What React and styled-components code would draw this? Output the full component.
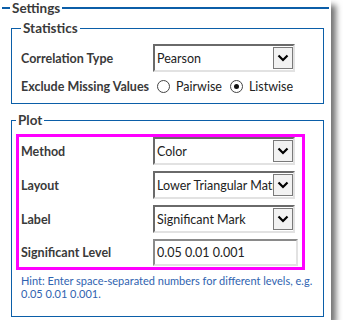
import React, { useState } from 'react';
import styled, { createGlobalStyle } from 'styled-components';

const GlobalStyle = createGlobalStyle`
	html, body {
		margin: 0;
		padding: 0;
		background: #fff;
	}
	body {
		font-family: Lato, 'Liberation Sans', sans-serif;
		color: #333;
	}
`;

const Panel = styled.div`
	width: 331px;
	background: #fff;
	box-shadow: 5px 5px 6px rgba(0, 0, 0, 0.55);
	padding: 0 2px 3px 2px;
	box-sizing: border-box;
`;

const Settings = styled.fieldset`
	margin: 0;
	padding: 4px 5px 0 9px;
	border: none;
	border-top: 2px solid #0b5ea8;
	min-width: 0;

	> legend {
		font-size: 13.5px;
		line-height: 16px;
		font-weight: 700;
		color: #3a3a3a;
		padding: 0 2px;
		margin-left: -1px;
	}
`;

const Group = styled.fieldset`
	margin: ${p => (p.$first ? '0' : '8px')} 0 0 0;
	padding: ${p => p.$pad};
	border: 1px solid #0b5ea8;
	min-width: 0;

	> legend {
		font-size: 13.5px;
		line-height: 16px;
		font-weight: 700;
		color: #3a3a3a;
		padding: 0 2px;
	}
`;

const Rows = styled.div`
	display: grid;
	grid-template-columns: 132px 1fr;
	align-items: center;
	row-gap: ${p => p.$gap}px;
`;

const Label = styled.div`
	font-size: 12.5px;
	font-weight: 700;
	color: #3a3a3a;
	white-space: nowrap;
`;

const Select = styled.div`
	width: 142px;
	height: 28px;
	box-sizing: border-box;
	display: flex;
	align-items: center;
	border-top: 2px solid #6a6a6a;
	border-left: 2px solid #6a6a6a;
	border-bottom: 2px solid #e2e2e2;
	border-right: 2px solid #e2e2e2;
	background: #fff;
	font-size: 12.5px;
	color: #222;
`;

const SelectText = styled.div`
	flex: 1;
	padding-left: 2px;
	overflow: hidden;
	white-space: nowrap;
`;

const DropButton = styled.div`
	width: 20px;
	height: 22px;
	box-sizing: border-box;
	border: 1px solid #7a7a7a;
	background: #f2f2f2;
	display: flex;
	align-items: center;
	justify-content: center;
`;

const TextInput = styled.input`
	width: 145px;
	height: 27px;
	box-sizing: border-box;
	border-top: 2px solid #8a8a8a;
	border-left: 2px solid #8a8a8a;
	border-bottom: 2px solid #e2e2e2;
	border-right: 2px solid #e2e2e2;
	padding: 0 2px;
	font-family: inherit;
	font-size: 12.5px;
	color: #222;
	outline: none;
`;

const Radios = styled.div`
	display: flex;
	align-items: center;
	font-size: 12.5px;
	color: #222;
	padding-left: 4px;
`;

const RadioItem = styled.label`
	display: flex;
	align-items: center;
	gap: 6px;
	margin-right: 8px;
	cursor: pointer;
`;

const Circle = styled.span`
	width: 11px;
	height: 11px;
	border-radius: 50%;
	border: 1px solid #444;
	display: flex;
	align-items: center;
	justify-content: center;

	&::after {
		content: '';
		width: 5px;
		height: 5px;
		border-radius: 50%;
		background: ${p => (p.$on ? '#111' : 'transparent')};
	}
`;

const Highlight = styled.div`
	width: 289px;
	box-sizing: border-box;
	border: 3px solid #ff00ff;
	padding: 0 0 1px 2px;
`;

const Hint = styled.div`
	margin-top: 4px;
	padding-left: 5px;
	font-size: 11px;
	line-height: 13px;
	color: #2f63b0;
	white-space: nowrap;
`;

const Chevron = () => (
	<svg width="12" height="8" viewBox="0 0 12 8">
		<polyline points="1.5,1.5 6,6 10.5,1.5" fill="none" stroke="#000" strokeWidth="2.2" />
	</svg>
);

const Dropdown = ({ value }) => (
	<Select>
		<SelectText>{value}</SelectText>
		<DropButton>
			<Chevron />
		</DropButton>
	</Select>
);

const App = () => {
	const [missing, setMissing] = useState('listwise');

	return (
		<>
			<GlobalStyle />
			<Panel>
				<Settings>
					<legend>Settings</legend>
					<Group $first $pad="8px 9px 9px 9px">
						<legend>Statistics</legend>
						<Rows $gap={7}>
							<Label>Correlation Type</Label>
							<Dropdown value="Pearson" />
							<Label>Exclude Missing Values</Label>
							<Radios>
								<RadioItem onClick={() => setMissing('pairwise')}>
									<Circle $on={missing === 'pairwise'} />
									Pairwise
								</RadioItem>
								<RadioItem onClick={() => setMissing('listwise')}>
									<Circle $on={missing === 'listwise'} />
									Listwise
								</RadioItem>
							</Radios>
						</Rows>
					</Group>
					<Group $pad="6px 4px 16px 4px">
						<legend>Plot</legend>
						<Highlight>
							<Rows $gap={6}>
								<Label>Method</Label>
								<Dropdown value="Color" />
								<Label>Layout</Label>
								<Dropdown value="Lower Triangular Matrix" />
								<Label>Label</Label>
								<Dropdown value="Significant Mark" />
								<Label>Significant Level</Label>
								<TextInput defaultValue="0.05 0.01 0.001" />
							</Rows>
						</Highlight>
						<Hint>
							Hint: Enter space-separated numbers for different levels, e.g.
							<br />
							0.05 0.01 0.001.
						</Hint>
					</Group>
				</Settings>
			</Panel>
		</>
	);
};

export default App;
